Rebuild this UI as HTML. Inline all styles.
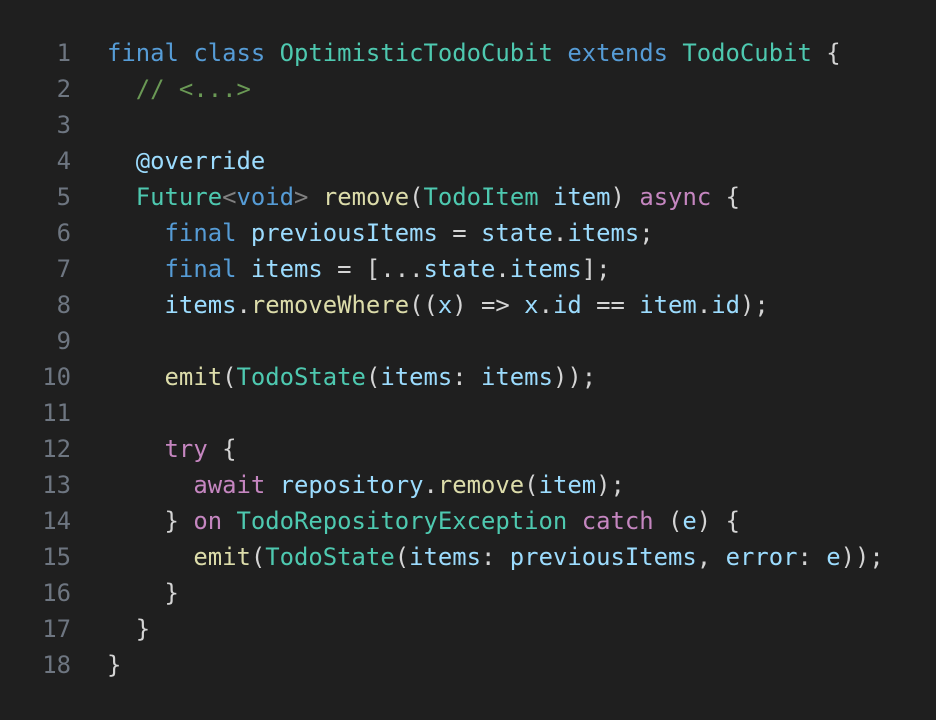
<!DOCTYPE html>
<html><head><style>
body{margin:0;background:#1f1f1f;width:936px;height:720px;overflow:hidden}
.c,.n{position:absolute;top:35px;font-family:"DejaVu Sans Mono","Liberation Mono",monospace;font-size:23.9px;line-height:36px;white-space:pre}
.c{left:107px;color:#d4d4d4}
.n{left:0;width:71px;text-align:right;color:#6e7681}
.k{color:#569cd6}.t{color:#4ec9b0}.f{color:#dcdcaa}.v{color:#9cdcfe}.m{color:#c586c0}.g{color:#6a9955}.a{color:#808080}
</style></head><body>
<div class="n">1
2
3
4
5
6
7
8
9
10
11
12
13
14
15
16
17
18</div>
<div class="c"><span class="k">final</span> <span class="k">class</span> <span class="t">OptimisticTodoCubit</span> <span class="k">extends</span> <span class="t">TodoCubit</span> {
  <span class="g">// &lt;...&gt;</span>

  <span class="v">@override</span>
  <span class="t">Future</span><span class="a">&lt;</span><span class="k">void</span><span class="a">&gt;</span> <span class="f">remove</span>(<span class="t">TodoItem</span> <span class="v">item</span>) <span class="m">async</span> {
    <span class="k">final</span> <span class="v">previousItems</span> = <span class="v">state</span>.<span class="v">items</span>;
    <span class="k">final</span> <span class="v">items</span> = [...<span class="v">state</span>.<span class="v">items</span>];
    <span class="v">items</span>.<span class="f">removeWhere</span>((<span class="v">x</span>) =&gt; <span class="v">x</span>.<span class="v">id</span> == <span class="v">item</span>.<span class="v">id</span>);

    <span class="f">emit</span>(<span class="t">TodoState</span>(<span class="v">items</span>: <span class="v">items</span>));

    <span class="m">try</span> {
      <span class="m">await</span> <span class="v">repository</span>.<span class="f">remove</span>(<span class="v">item</span>);
    } <span class="m">on</span> <span class="t">TodoRepositoryException</span> <span class="m">catch</span> (<span class="v">e</span>) {
      <span class="f">emit</span>(<span class="t">TodoState</span>(<span class="v">items</span>: <span class="v">previousItems</span>, <span class="v">error</span>: <span class="v">e</span>));
    }
  }
}</div>
</body></html>
